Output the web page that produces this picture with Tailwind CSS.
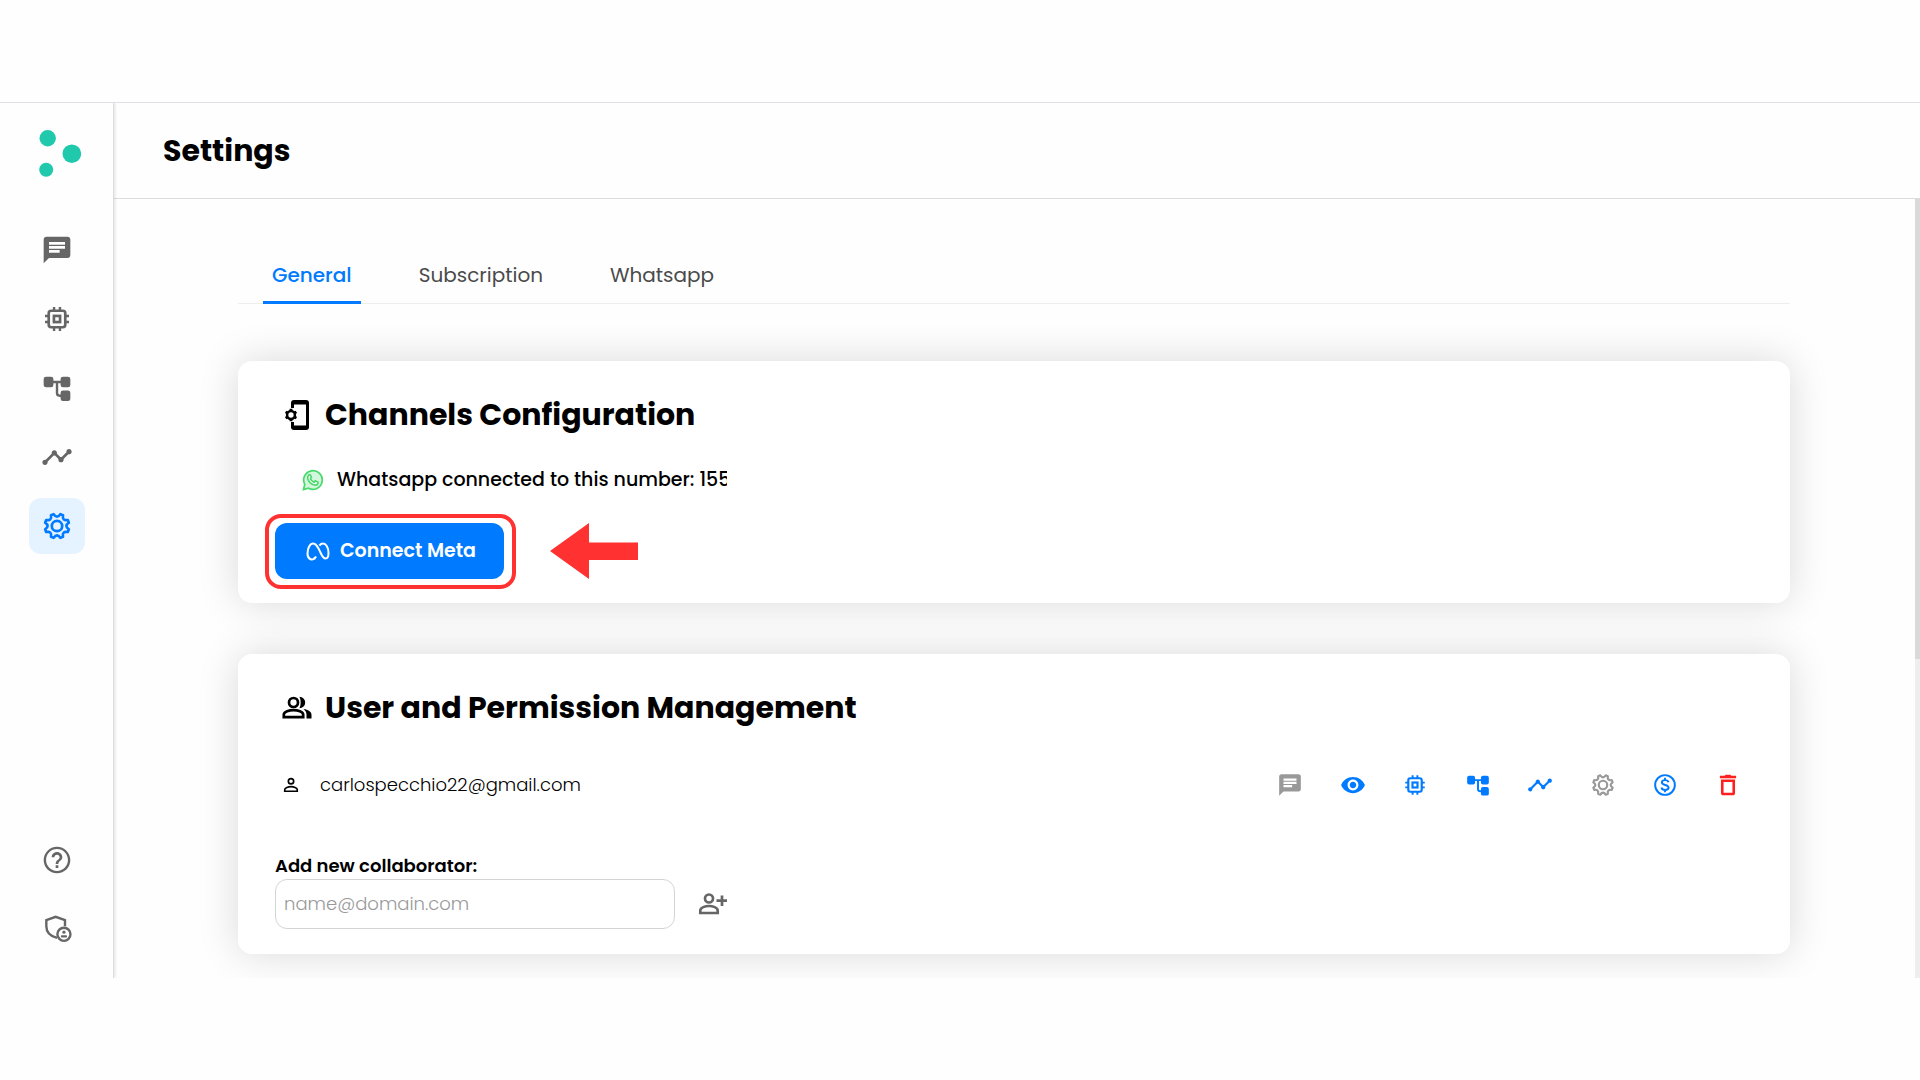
<!DOCTYPE html>
<html lang="en">
<head>
<meta charset="utf-8">
<meta name="viewport" content="width=device-width, initial-scale=1">
<title>Settings</title>
<script src="https://cdn.jsdelivr.net/npm/@tailwindcss/browser@4"></script>
</head>
<body class="min-h-screen bg-[#fefefe] pt-[102px] pb-[102px] font-[Poppins,Inter,sans-serif] text-black">

<svg class="hidden" aria-hidden="true">
  <symbol id="chat" viewBox="0 0 24 24"><path fill="currentColor" d="M20 2H4c-1.1 0-1.99.9-1.99 2L2 22l4-4h14c1.1 0 2-.9 2-2V4c0-1.1-.9-2-2-2zM6 9h12v2H6V9zm8 5H6v-2h8v2zm4-6H6V6h12v2z"/></symbol>
  <symbol id="chip" viewBox="0 0 24 24"><g fill="none" stroke="currentColor" stroke-width="2"><rect x="5.800" y="5.800" width="12.400" height="12.400" rx="1.800"/><rect x="9.700" y="9.700" width="4.600" height="4.600"/></g><path fill="none" stroke="currentColor" stroke-width="1.800" d="M9.800 3v3M14.200 3v3M9.800 18v3M14.200 18v3M3 9.800h3M3 14.200h3M18 9.800h3M18 14.200h3"/></symbol>
  <symbol id="tree" viewBox="0 0 24 24"><g fill="currentColor"><rect x="2" y="3.500" width="7.300" height="8" rx="1.800"/><rect x="14.700" y="3.500" width="7.300" height="8" rx="1.800"/><rect x="14.700" y="13.800" width="7.300" height="8" rx="1.800"/></g><path fill="none" stroke="currentColor" stroke-width="1.800" d="M9 7.500h6M12 7.500v8.300q0 2 2 2h1.500"/></symbol>
  <symbol id="trend" viewBox="0 0 24 24"><path fill="currentColor" d="M23 8c0 1.100-.9 2-2 2-.18 0-.35-.02-.51-.07l-3.560 3.550c.05.16.07.34.07.52 0 1.100-.9 2-2 2s-2-.9-2-2c0-.18.02-.36.07-.52l-2.550-2.550c-.16.05-.34.07-.52.07s-.36-.02-.52-.07l-4.550 4.560c.05.16.07.33.07.51 0 1.100-.9 2-2 2s-2-.9-2-2 .9-2 2-2c.18 0 .35.02.51.07l4.560-4.550C8.020 9.360 8 9.180 8 9c0-1.100.9-2 2-2s2 .9 2 2c0 .18-.02.36-.07.52l2.550 2.550c.16-.05.34-.07.52-.07s.36.02.52.07l3.550-3.560C19.020 8.350 19 8.180 19 8c0-1.100.9-2 2-2s2 .9 2 2z"/></symbol>
  <symbol id="gear" viewBox="-12 -12 24 24"><g fill="none" stroke="currentColor" stroke-width="2" stroke-linejoin="round"><path d="M8.900 2.500L8.100 4.500Q3.700 3.700 4.500 8.100L2.500 8.900Q0 5.200-2.500 8.900L-4.500 8.100Q-3.700 3.700-8.100 4.500L-8.900 2.500Q-5.200 0-8.900-2.500L-8.100-4.500Q-3.700-3.700-4.500-8.100L-2.500-8.900Q0-5.200 2.500-8.900L4.500-8.100Q3.700-3.700 8.100-4.500L8.900-2.500Q5.200 0 8.900 2.500Z"/><circle r="3.900"/></g></symbol>
  <symbol id="help" viewBox="0 0 24 24"><path fill="currentColor" d="M11 18h2v-2h-2v2zm1-16C6.480 2 2 6.480 2 12s4.480 10 10 10 10-4.480 10-10S17.520 2 12 2zm0 18.200c-4.530 0-8.200-3.670-8.200-8.200s3.670-8.200 8.200-8.200 8.200 3.670 8.200 8.200-3.670 8.200-8.200 8.200zM12 6c-2.210 0-4 1.790-4 4h2c0-1.100.9-2 2-2s2 .9 2 2c0 2-3 1.750-3 5h2c0-2.250 3-2.500 3-5 0-2.210-1.790-4-4-4z"/></symbol>
  <symbol id="shield" viewBox="0 0 24 24"><g fill="none" stroke="currentColor" stroke-width="1.800"><path d="M12 18.700C7 17.500 4 14.500 4 10V5.400l7-2.500 7 2.500V10"/><circle cx="17.200" cy="16" r="4.900"/></g><circle fill="currentColor" cx="17.200" cy="14.400" r="1.200"/><rect fill="currentColor" x="14.900" y="16.700" width="4.600" height="1.700" rx=".6"/></symbol>
  <symbol id="eye" viewBox="0 0 24 24"><path fill="currentColor" d="M12 4.500C7 4.500 2.730 7.610 1 12c1.730 4.390 6 7.500 11 7.500s9.270-3.110 11-7.500c-1.730-4.390-6-7.500-11-7.500zM12 17c-2.760 0-5-2.240-5-5s2.240-5 5-5 5 2.240 5 5-2.240 5-5 5zm0-8c-1.660 0-3 1.340-3 3s1.340 3 3 3 3-1.340 3-3-1.340-3-3-3z"/></symbol>
  <symbol id="coin" viewBox="0 0 24 24"><g fill="none" stroke="currentColor" stroke-width="1.800"><circle cx="12" cy="12" r="9.100"/><path d="M15.200 9.500c-.4-1.300-1.500-2-3.100-2-1.800 0-3 .9-3 2.200 0 3.100 6.200 1.500 6.200 4.700 0 1.300-1.300 2.200-3.200 2.200-1.800 0-3-.8-3.400-2.300M12 5.300v2.200M12 16.500v2.200"/></g></symbol>
  <symbol id="trash" viewBox="0 0 24 24"><path fill="currentColor" d="M5.500 19.500c0 1.100.9 2 2 2h9c1.100 0 2-.9 2-2V7h-13v12.500zM7.900 9.200h8.200v10H7.900v-10zM15 3.500l-.8-.9H9.800l-.8.9H4.500v2.300h15V3.500z"/></symbol>
  <symbol id="person" viewBox="0 0 24 24"><g fill="none" stroke="currentColor" stroke-width="2"><circle cx="12" cy="7.500" r="3.200"/><path d="M4.500 19.500v-2c0-2.200 4.300-3.500 7.500-3.500s7.500 1.300 7.500 3.500v2z"/></g></symbol>
</svg>

<div class="flex overflow-hidden border-t border-[#dfe0e6]">
  <!-- Side navigation -->
  <nav aria-label="Main" class="z-10 flex w-[114px] shrink-0 flex-col items-center border-r border-[#dddddd] pb-[21px] shadow-[1px_0_3px_rgba(0,0,0,0.12)]">
    <a href="#" aria-label="Home" class="mt-6 ml-1 block h-[52px] w-[44px]">
      <svg viewBox="37 127 44 52" class="size-full" fill="#20c9ac"><circle cx="47.700" cy="138.200" r="8.200"/><circle cx="71.800" cy="153.700" r="9.300"/><circle cx="46.200" cy="169.800" r="7"/></svg>
    </a>
    <div class="mt-[43px] flex flex-col gap-[13px] text-[#666666]">
      <a href="#" aria-label="Chats" class="grid size-14 place-items-center rounded-xl"><svg class="size-8"><use href="#chat"/></svg></a>
      <a href="#" aria-label="Automation" class="grid size-14 place-items-center rounded-xl"><svg class="size-8"><use href="#chip"/></svg></a>
      <a href="#" aria-label="Flows" class="grid size-14 place-items-center rounded-xl"><svg class="size-8"><use href="#tree"/></svg></a>
      <a href="#" aria-label="Analytics" class="grid size-14 place-items-center rounded-xl"><svg class="size-8"><use href="#trend"/></svg></a>
      <a href="#" aria-label="Settings" aria-current="page" class="grid size-14 place-items-center rounded-xl bg-[#e5f2ff] text-[#007bff]"><svg class="size-8"><use href="#gear"/></svg></a>
    </div>
    <div class="mt-auto flex flex-col gap-[13px] text-[#666666]">
      <a href="#" aria-label="Help" class="grid size-14 place-items-center"><svg class="size-8"><use href="#help"/></svg></a>
      <a href="#" aria-label="Privacy" class="grid size-14 place-items-center"><svg class="size-8"><use href="#shield"/></svg></a>
    </div>
  </nav>

  <div class="flex min-w-0 flex-1 flex-col">
    <header class="flex h-24 items-center border-b border-[#dddddd] pl-[49px]">
      <h1 class="text-[30px] leading-10 font-bold">Settings</h1>
    </header>

    <div class="flex flex-1">
      <main class="min-w-0 flex-1 overflow-hidden pt-[50px] pr-[125px] pb-6 pl-[124px]">
        <nav aria-label="Settings sections" class="flex gap-[49px] border-b border-[#eeeeee] pl-[25px] text-xl leading-[52px] text-[#4a4a4a]">
          <a href="#" aria-current="page" class="-mb-px border-b-3 border-[#007bff] px-[9px] font-medium text-[#007bff]">General</a>
          <a href="#" class="px-[9px]">Subscription</a>
          <a href="#" class="px-[9px]">Whatsapp</a>
        </nav>

        <section class="mt-[57px] rounded-[14px] bg-white px-[37px] pt-[33px] pb-6 shadow-[0_0_40px_rgba(0,0,0,0.15)]">
          <h2 class="flex items-center gap-3 pl-1.5 text-[30px] leading-[42px] font-bold">
            <svg class="size-8" viewBox="0 0 32 32" fill="none" stroke="currentColor"><path stroke-width="3" d="M11.500 9V4q0-1.500 1.500-1.500h12q1.500 0 1.500 1.500v24q0 1.500-1.500 1.500H13q-1.500 0-1.500-1.500V23M12 4h14M12 28h14"/><circle cx="10" cy="16" r="3.900" stroke-width="2.500"/><path stroke-width="2.800" d="M10 9.800v2.200M10 20v2.200M4.600 12.900l1.900 1.100M15.400 12.900l-1.900 1.100M4.600 19.100l1.900-1.100M15.400 19.100l-1.900-1.100"/></svg>
            Channels Configuration
          </h2>
          <p class="mt-6 flex items-center gap-3 pl-[26px] text-[19px] leading-10 font-medium">
            <svg class="size-6" viewBox="0 0 24 24"><path fill="#d3f7dc" stroke="#48d96b" stroke-width="1.700" d="M2.500 21.500l1.300-5A9.300 9.300 0 1 1 7.500 20.200z"/><path fill="#f4fff6" stroke="#48d96b" stroke-width="1.600" stroke-linejoin="round" d="M8 6.800h1.300l1.100 2.600-1 1.400c.8 1.500 2 2.600 3.700 3.400l1.200-1.400 2.700 1.300v1.300c-.5 1.300-1.900 1.900-3.300 1.600-3.500-.7-6.200-3.300-7-6.500-.3-1.400.3-2.900 1.300-3.700z"/></svg>
            <span class="w-[390px] overflow-hidden whitespace-nowrap">Whatsapp connected to this number: 155</span>
          </p>
          <div class="mt-[23px] flex items-center gap-[46px]">
            <div class="relative">
              <button type="button" class="flex h-14 w-[229px] items-center gap-2.5 rounded-xl bg-[#007bff] pl-[31px] text-[19px] font-semibold text-white">
                <svg class="h-6 w-6" viewBox="0 0 24 24" fill="none" stroke="currentColor" stroke-width="2"><path d="M9 19.500c-3 2-7.500 1-7.500-5C1.500 9 4 4.500 7.200 4.500c3.300 0 5 4 7 8.500 1.800 4 3 6.500 5.300 6.500 2.300 0 3-2.500 3-5.500C22.500 8.500 20 4.500 17 4.500c-1.500 0-2.600.8-3.600 2M7.500 19.700c1.700-.6 2.600-2.200 2.600-2.200"/></svg>
                Connect Meta
              </button>
              <span class="pointer-events-none absolute -top-[9px] -right-3 -bottom-2.5 -left-2.5 rounded-2xl border-4 border-[#ff3131]"></span>
            </div>
            <svg class="h-14 w-[88px]" viewBox="0 0 88 56" fill="#ff3131"><path d="M0 28L39 0v19.500h49v17.500H39v19z"/></svg>
          </div>
        </section>

        <section class="mt-[51px] rounded-[14px] bg-white px-[37px] pt-[33px] pb-[25px] shadow-[0_0_40px_rgba(0,0,0,0.15)]">
          <h2 class="flex items-center gap-3 pl-1.5 text-[30px] leading-[42px] font-bold">
            <svg class="size-8" viewBox="0 0 32 32" fill="none" stroke="currentColor" stroke-width="2.700"><circle cx="12.500" cy="10.500" r="4.500"/><path d="M2.800 25.200v-2.500c0-3 5.500-4.500 9.700-4.500s9.700 1.500 9.700 4.500v2.500z"/><path fill="currentColor" stroke="none" d="M18.500 4.800a5.700 5.700 0 0 1 0 11.400c1.600-3.500 1.600-7.900 0-11.400zM22.500 17c4.500.8 8 2.500 8 5.700v3.800h-5v-4c0-2.200-1.200-4-3-5.500z"/></svg>
            User and Permission Management
          </h2>
          <div class="mt-[31px] flex h-[50px] items-center">
            <svg class="ml-1.5 size-5"><use href="#person"/></svg>
            <span class="ml-[19px] text-lg font-light">carlospecchio22@gmail.com</span>
            <div class="-mr-1.5 ml-auto flex items-center">
              <button type="button" aria-label="Chats" class="grid h-10 w-[62px] place-items-center text-[#999999]"><svg class="size-[26px]"><use href="#chat"/></svg></button>
              <button type="button" aria-label="View" class="grid h-10 w-[63px] place-items-center text-[#007bff]"><svg class="size-[26px]"><use href="#eye"/></svg></button>
              <button type="button" aria-label="Automation" class="grid h-10 w-[62px] place-items-center text-[#007bff]"><svg class="size-[26px]"><use href="#chip"/></svg></button>
              <button type="button" aria-label="Flows" class="grid h-10 w-[63px] place-items-center text-[#007bff]"><svg class="size-[26px]"><use href="#tree"/></svg></button>
              <button type="button" aria-label="Analytics" class="grid h-10 w-[62px] place-items-center text-[#007bff]"><svg class="size-[26px]"><use href="#trend"/></svg></button>
              <button type="button" aria-label="Settings" class="grid h-10 w-[63px] place-items-center text-[#999999]"><svg class="size-[26px]"><use href="#gear"/></svg></button>
              <button type="button" aria-label="Billing" class="grid h-10 w-[62px] place-items-center text-[#007bff]"><svg class="size-[26px]"><use href="#coin"/></svg></button>
              <button type="button" aria-label="Remove user" class="grid h-10 w-[63px] place-items-center text-[#ff1f1f]"><svg class="size-[26px]"><use href="#trash"/></svg></button>
            </div>
          </div>
          <form class="mt-[43px]">
            <label for="collaborator" class="block text-lg leading-[26px] font-semibold">Add new collaborator:</label>
            <div class="flex items-center gap-[23px]">
              <input id="collaborator" type="email" placeholder="name@domain.com" class="h-[50px] w-[400px] rounded-xl border border-[#d4d4d4] bg-white px-2 pb-0.5 text-lg font-light placeholder:text-[#999999]">
              <button type="button" aria-label="Add collaborator" class="text-[#666666]">
                <svg class="size-8" viewBox="0 0 32 32" fill="none" stroke="currentColor" stroke-width="2.700"><circle cx="11" cy="10.500" r="4"/><path d="M2.300 25v-2.500c0-3 5-4.500 8.700-4.500s8.700 1.500 8.700 4.500V25zM24 7.500v10.500M18.500 12.700h10.500"/></svg>
              </button>
            </div>
          </form>
        </section>
      </main>
      <div class="w-[5px] bg-[#eeeeee]" aria-hidden="true"><div class="h-[59%] bg-[#d9d9d9]"></div></div>
    </div>
  </div>
</div>
</body>
</html>
